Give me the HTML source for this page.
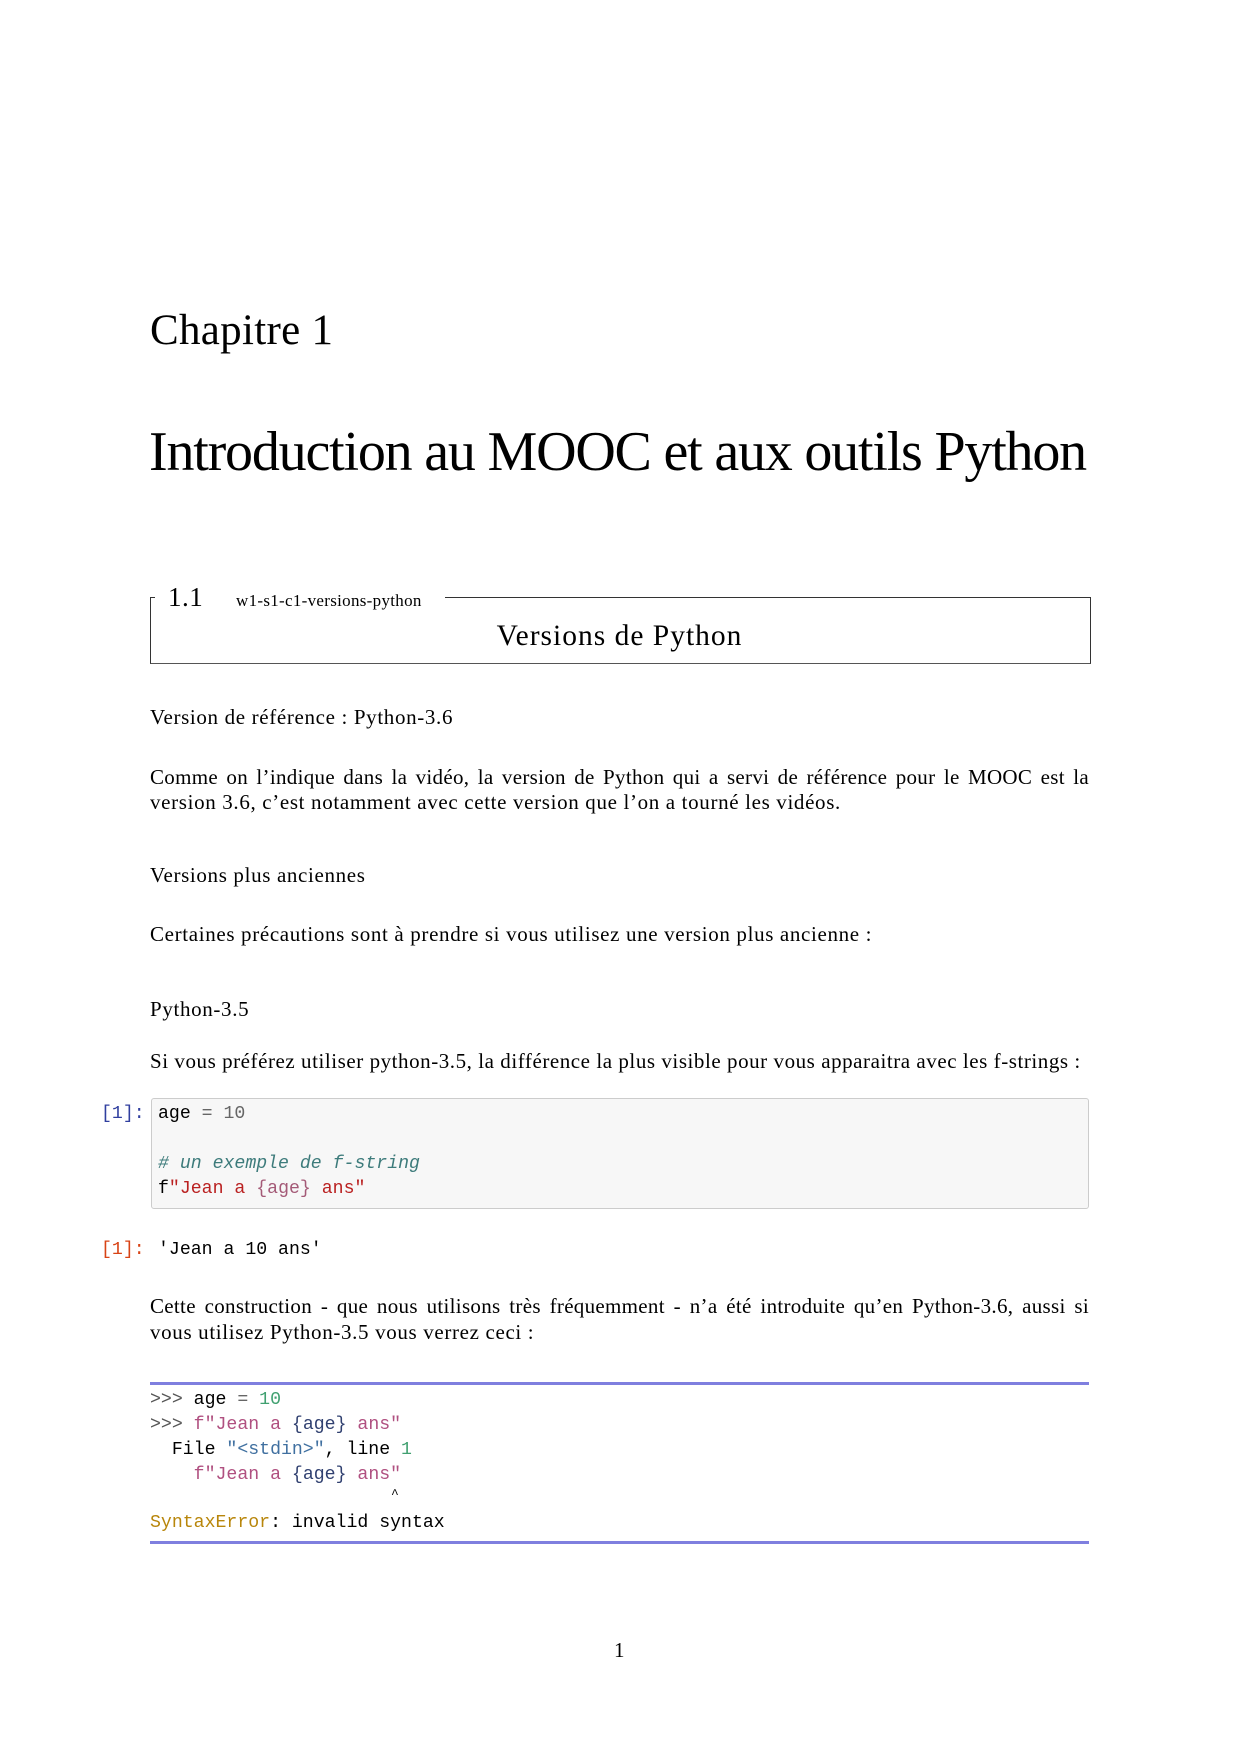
<!DOCTYPE html>
<html><head><meta charset="utf-8"><style>
body{margin:0;background:#fff;width:1241px;height:1754px;position:relative;overflow:hidden;font-family:"Liberation Serif",serif;color:#000}
.a{position:absolute;white-space:nowrap}
.s{font-size:21px;letter-spacing:0.65px}
.m{font-family:"Liberation Mono",monospace;font-size:18.2px}
.j{text-align:justify;text-align-last:justify;width:939px;white-space:normal}
</style></head><body>
<div class="a" style="left:150px;top:306px;font-size:43px;letter-spacing:0.3px">Chapitre 1</div>
<div class="a" style="left:149px;top:420px;font-size:56px;letter-spacing:-1.2px">Introduction au MOOC et aux outils Python</div>

<div class="a" style="left:150px;top:597px;width:939px;height:66px;border:1px solid #333;border-top:none;border-bottom:1.5px solid #555"></div>
<div class="a" style="left:150px;top:597px;width:5px;border-top:1px solid #333"></div>
<div class="a" style="left:445px;top:597px;width:645px;border-top:1px solid #333"></div>
<div class="a" style="left:168px;top:582px;font-size:27px;letter-spacing:0.5px">1.1</div>
<div class="a" style="left:236px;top:591px;font-size:17px;letter-spacing:0.3px">w1-s1-c1-versions-python</div>
<div class="a" style="left:150px;top:620px;width:939px;text-align:center;font-size:29.5px;letter-spacing:1px">Versions de Python</div>

<div class="a s" style="left:150px;top:705px">Version de référence : Python-3.6</div>
<div class="a s j" style="left:150px;top:764px;line-height:26px;letter-spacing:0.3px">Comme on l’indique dans la vidéo, la version de Python qui a servi de référence pour le MOOC est la</div>
<div class="a s" style="left:150px;top:790px">version 3.6, c’est notamment avec cette version que l’on a tourné les vidéos.</div>
<div class="a s" style="left:150px;top:863px">Versions plus anciennes</div>
<div class="a s" style="left:150px;top:922px">Certaines précautions sont à prendre si vous utilisez une version plus ancienne :</div>
<div class="a s" style="left:150px;top:997px">Python-3.5</div>
<div class="a s" style="left:150px;top:1049px;letter-spacing:0.55px">Si vous préférez utiliser python-3.5, la différence la plus visible pour vous apparaitra avec les f-strings :</div>

<div class="a m" style="left:101px;top:1104px;color:#303f9f">[1]:</div>
<div class="a" style="left:151px;top:1098px;width:936px;height:109px;background:#f7f7f7;border:1.5px solid #ccc;border-radius:3px"></div>
<div class="a m" style="left:158px;top:1104px">age <span style="color:#666">=</span> <span style="color:#666">10</span></div>
<div class="a m" style="left:158px;top:1154px;color:#3d7b7b;font-style:italic">
# un exemple de f-string</div>
<div class="a m" style="left:158px;top:1179px">f<span style="color:#ba2121">"Jean a </span><span style="color:#a45a77">{age}</span><span style="color:#ba2121"> ans"</span></div>

<div class="a m" style="left:101px;top:1240px;color:#d84315">[1]:</div>
<div class="a m" style="left:158px;top:1240px">'Jean a 10 ans'</div>

<div class="a s j" style="left:150px;top:1294px;letter-spacing:0.3px">Cette construction - que nous utilisons très fréquemment - n’a été introduite qu’en Python-3.6, aussi si</div>
<div class="a s" style="left:150px;top:1320px">vous utilisez Python-3.5 vous verrez ceci :</div>

<div class="a" style="left:150px;top:1382px;width:939px;height:3px;background:#7f7fdf"></div>
<div class="a m" style="left:150px;top:1388px;line-height:25px;white-space:pre"><span style="color:#555">&gt;&gt;&gt;</span> age <span style="color:#666">=</span> <span style="color:#40a070">10</span>
<span style="color:#555">&gt;&gt;&gt;</span> <span style="color:#b05080">f"Jean a </span><span style="color:#304070">{age}</span><span style="color:#b05080"> ans"</span>
  File <span style="color:#4070a0">"&lt;stdin&gt;"</span>, line <span style="color:#40a070">1</span>
    <span style="color:#b05080">f"Jean a </span><span style="color:#304070">{age}</span><span style="color:#b05080"> ans"</span></div>
<div class="a m" style="left:391px;top:1487px;font-size:13px">^</div>
<div class="a m" style="left:150px;top:1513px"><span style="color:#b8860b">SyntaxError</span>: invalid syntax</div>
<div class="a" style="left:150px;top:1541px;width:939px;height:3px;background:#7f7fdf"></div>

<div class="a s" style="left:614px;top:1638px">1</div>
</body></html>
